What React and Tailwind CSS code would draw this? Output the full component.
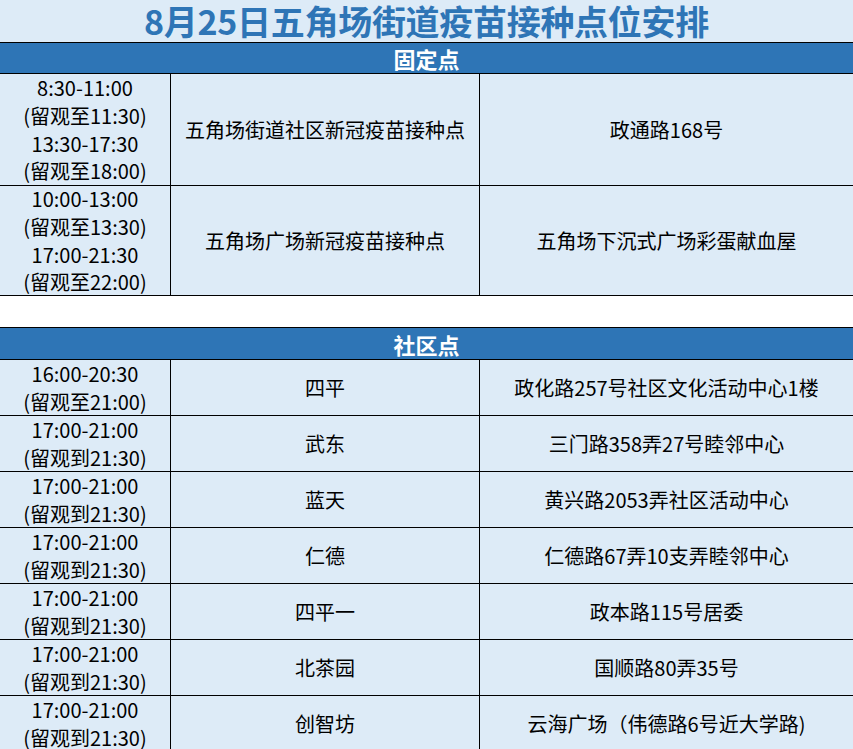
import React from "react";

const fixedRows = [
  {
    times: ["8:30-11:00", "(留观至11:30)", "13:30-17:30", "(留观至18:00)"],
    name: "五角场街道社区新冠疫苗接种点",
    addr: "政通路168号",
    h: "h-[112px]",
  },
  {
    times: ["10:00-13:00", "(留观至13:30)", "17:00-21:30", "(留观至22:00)"],
    name: "五角场广场新冠疫苗接种点",
    addr: "五角场下沉式广场彩蛋献血屋",
    h: "h-[110px]",
  },
];

const communityRows = [
  { times: ["16:00-20:30", "(留观至21:00)"], name: "四平", addr: "政化路257号社区文化活动中心1楼" },
  { times: ["17:00-21:00", "(留观到21:30)"], name: "武东", addr: "三门路358弄27号睦邻中心" },
  { times: ["17:00-21:00", "(留观到21:30)"], name: "蓝天", addr: "黄兴路2053弄社区活动中心" },
  { times: ["17:00-21:00", "(留观到21:30)"], name: "仁德", addr: "仁德路67弄10支弄睦邻中心" },
  { times: ["17:00-21:00", "(留观到21:30)"], name: "四平一", addr: "政本路115号居委" },
  { times: ["17:00-21:00", "(留观到21:30)"], name: "北茶园", addr: "国顺路80弄35号" },
  { times: ["17:00-21:00", "(留观到21:30)"], name: "创智坊", addr: "云海广场（伟德路6号近大学路)" },
];

function Row({ times, name, addr, h, lh }) {
  return (
    <div className={`flex ${h} shrink-0 border-b border-black bg-[#ddebf7] text-[20px] text-black`}>
      <div className={`w-[170px] shrink-0 flex flex-col items-center justify-center ${lh}`}>
        {times.map((t, i) => (
          <span key={i}>{t}</span>
        ))}
      </div>
      <div className="w-[309px] shrink-0 border-l border-black flex items-center justify-center">
        {name}
      </div>
      <div className="flex-1 border-l border-black flex items-center justify-center">
        {addr}
      </div>
    </div>
  );
}

function SectionHeader({ title, h }) {
  return (
    <div className={`${h} shrink-0 bg-[#2e75b6] border-b border-black flex items-center justify-center text-white font-bold text-[22px] leading-none`}>
      {title}
    </div>
  );
}

export default function App() {
  return (
    <div
      className="w-[853px] h-[749px] overflow-hidden bg-white flex flex-col"
      style={{ fontFamily: '"Noto Sans CJK SC", "Noto Sans", sans-serif' }}
    >
      <div className="h-[43px] shrink-0 bg-[#ddebf7] border-b border-black flex items-center justify-center">
        <h1 className="text-[34px] font-bold text-[#2e75b6] leading-[42px] tracking-[-0.3px]">
          8月25日五角场街道疫苗接种点位安排
        </h1>
      </div>
      <SectionHeader title="固定点" h="h-[31px]" />
      {fixedRows.map((r, i) => (
        <Row key={i} {...r} lh="leading-[27.7px]" />
      ))}
      <div className="h-[32px] shrink-0 border-b border-black"></div>
      <SectionHeader title="社区点" h="h-[32px]" />
      {communityRows.map((r, i) => (
        <Row key={i} {...r} h="h-[56px]" lh="leading-[28px]" />
      ))}
    </div>
  );
}
